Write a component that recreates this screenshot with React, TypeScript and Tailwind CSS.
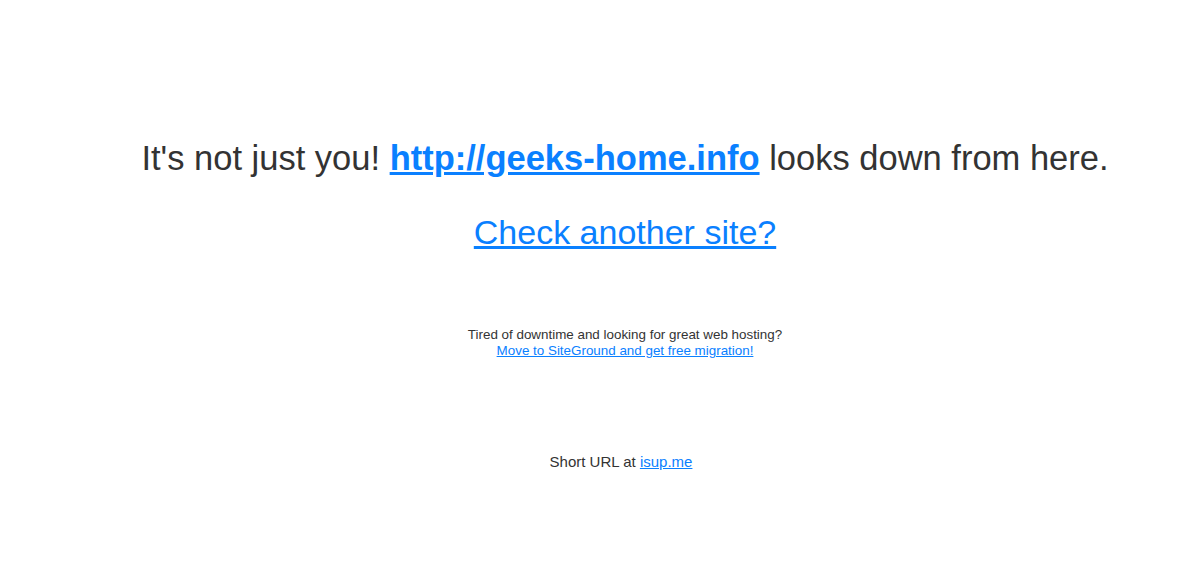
export default function App() {
  return (
    <div className="min-h-screen bg-white text-[#333] font-['Liberation_Sans',Arial,sans-serif]">
      <div className="flex flex-col items-center pl-[50px] pt-[137px] text-center">
        <p className="text-[34.5px] leading-[42px]">
          It's not just you!{" "}
          <a href="#" className="font-bold text-[#0a80ff] underline">
            http://geeks-home.info
          </a>{" "}
          looks down from here.
        </p>
        <p className="mt-[31px] text-[34px] leading-[44px]">
          <a href="#" className="text-[#0a80ff] underline">
            Check another site?
          </a>
        </p>
        <div className="mt-[73px] text-[13.4px] leading-[16px]">
          <p>Tired of downtime and looking for great web hosting?</p>
          <p>
            <a href="#" className="text-[#0a80ff] underline">
              Move to SiteGround and get free migration!
            </a>
          </p>
        </div>
        <p className="mt-[94px] pr-[8px] text-[15px] leading-[18px]">
          Short URL at{" "}
          <a href="#" className="text-[#0a80ff] underline">
            isup.me
          </a>
        </p>
      </div>
    </div>
  );
}
